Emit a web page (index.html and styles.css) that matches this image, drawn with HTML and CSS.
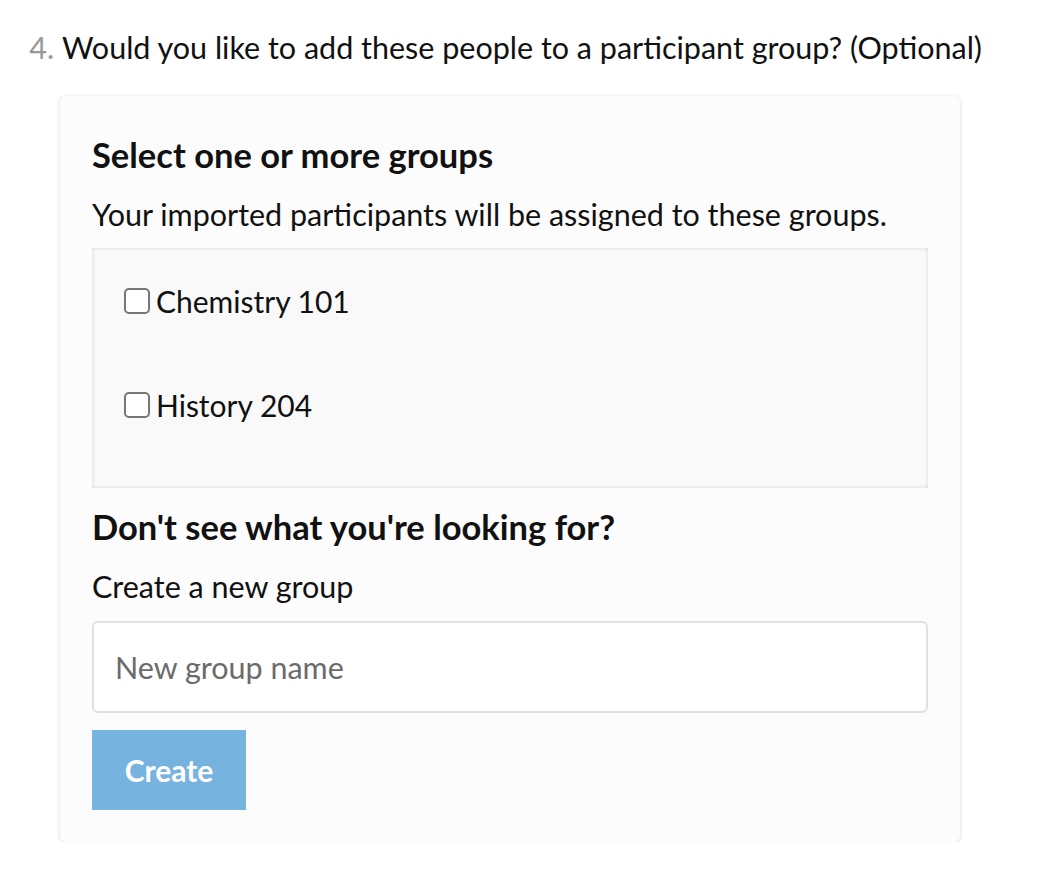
FILE: index.html
```html
<!DOCTYPE html>
<html lang="en">
<head>
    <meta charset="UTF-8">
    <meta name="viewport" content="width=device-width, initial-scale=1.0">
    <title>Import participants</title>
    <link rel="stylesheet" href="styles.css">
</head>
<body>
    <ol class="steps" start="4">
        <li class="step">
            <p class="step-title">Would you like to add these people to a participant group? (Optional)</p>
            <div class="card">
                <h2>Select one or more groups</h2>
                <p class="hint">Your imported participants will be assigned to these groups.</p>
                <div class="group-list">
                    <label class="group"><input type="checkbox" class="box"> Chemistry 101</label>
                    <label class="group"><input type="checkbox" class="box"> History 204</label>
                </div>
                <h2>Don't see what you're looking for?</h2>
                <p class="hint">Create a new group</p>
                <input type="text" class="group-name" placeholder="New group name">
                <button class="create">Create</button>
            </div>
        </li>
    </ol>
</body>
</html>
```

FILE: styles.css
```css
body {
    margin: 0;
    background: #fff;
    color: #111;
    font-family: 'Lato', sans-serif;
    font-size: 30.5px;
}
.steps {
    margin: 0;
    padding: 27px 0 0 62px;
}
.step::marker {
    color: #999;
}
.step-title {
    margin: 0;
    line-height: 40px;
}
.card {
    margin: 29px 0 0 -2px;
    width: 900px;
    box-sizing: border-box;
    padding: 39px 32px 32px;
    background: #fcfcfc;
    border-radius: 6px;
    box-shadow: 0 1px 4px rgba(0, 0, 0, 0.16);
}
.card h2 {
    margin: 0;
    font-size: 34.5px;
    line-height: 40px;
    font-weight: 700;
}
.hint {
    margin: 19px 0 0;
    line-height: 40px;
}
.group-list {
    margin-top: 14px;
    height: 240px;
    box-sizing: border-box;
    padding: 33px 32px 0;
    background: #f9f9f9;
    box-shadow: inset 0 0 4px rgba(0, 0, 0, 0.14);
}
.group {
    display: flex;
    align-items: center;
    gap: 6px;
    height: 40px;
    margin-bottom: 64px;
    font-size: 30px;
}
.box {
    appearance: none;
    margin: 0;
    width: 26px;
    height: 26px;
    border: 2px solid #767676;
    border-radius: 5px;
    background: #fff;
}
.card .group-list + h2 {
    margin-top: 19px;
}
.group-name {
    display: block;
    margin-top: 15px;
    width: 100%;
    height: 92px;
    box-sizing: border-box;
    padding: 0 21px;
    border: 2px solid #e0e0e0;
    border-radius: 6px;
    background: #fff;
    font-family: 'Lato', sans-serif;
    font-size: 30.5px;
}
.group-name::placeholder {
    color: #6b6b6b;
}
.create {
    display: block;
    margin-top: 17px;
    width: 154px;
    height: 80px;
    border: 0;
    background: #76b3de;
    color: #fff;
    font-family: 'Lato', sans-serif;
    font-size: 30px;
    font-weight: 700;
    cursor: pointer;
}
```
